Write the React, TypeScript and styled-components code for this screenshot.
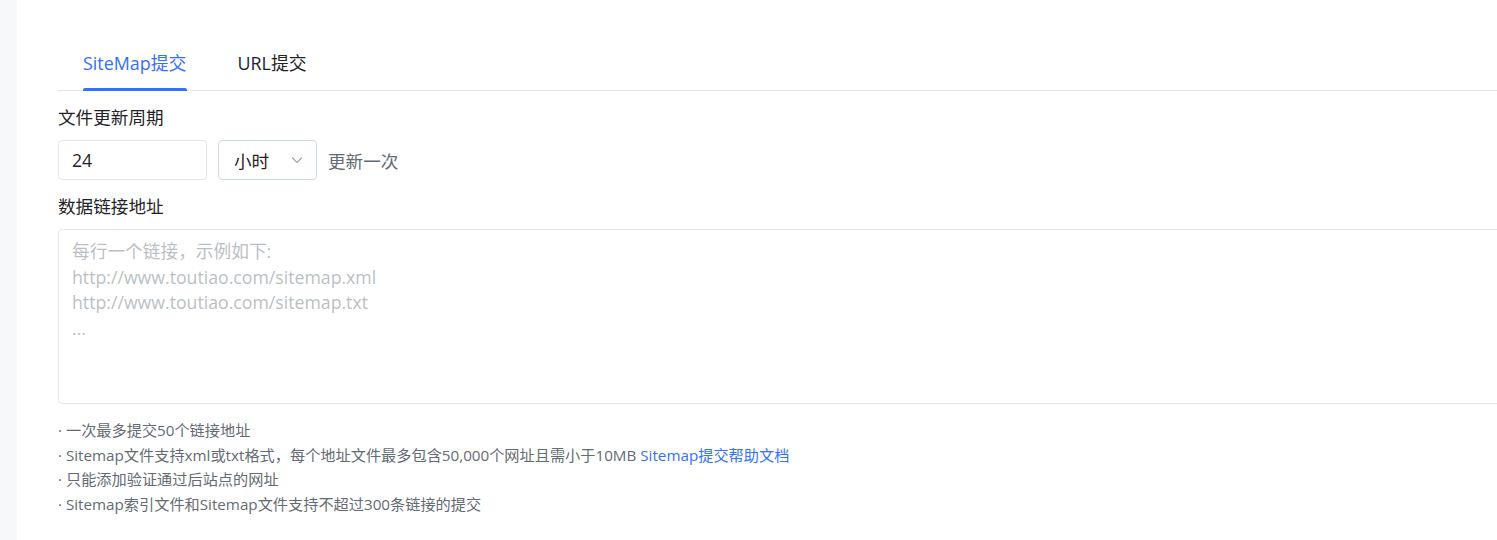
import React from "react";
import styled, { createGlobalStyle } from "styled-components";

const GlobalStyle = createGlobalStyle`
  html, body {
    margin: 0;
    padding: 0;
    background: #ffffff;
    overflow: hidden;
  }
  body {
    font-family: "Open Sans", "Noto Sans CJK SC", sans-serif;
    color: #1f2329;
  }
`;

const TextColor = "#1f2329";
const GreyTextColor = "#646a73";
const PlaceholderColor = "#bbbfc4";
const BorderColor = "#e5e6eb";
const PrimaryColor = "#3370ff";

const Page = styled.div`
  display: flex;
  height: 540px;
  width: 1497px;
  overflow: hidden;
`;

const SideStrip = styled.div`
  width: 17px;
  flex-shrink: 0;
  background: #f7f8fa;
`;

const Main = styled.main`
  flex: 1;
  padding: 40px 0 0 41px;
  min-width: 0;
`;

const Form = styled.div`
  width: 1460px;
`;

const TabBar = styled.div`
  display: flex;
  gap: 51px;
  padding-left: 25px;
  border-bottom: 1px solid ${BorderColor};
  height: 50px;
`;

const Tab = styled.div<{ $active?: boolean }>`
  position: relative;
  font-size: 17.9px;
  line-height: 47px;
  color: ${(p) => (p.$active ? PrimaryColor : TextColor)};
  cursor: pointer;
  &::after {
    content: "";
    display: ${(p) => (p.$active ? "block" : "none")};
    position: absolute;
    left: 0;
    right: 0;
    bottom: -1px;
    height: 3px;
    border-radius: 2px 2px 0 0;
    background: ${PrimaryColor};
  }
`;

const FieldLabel = styled.div`
  font-size: 17.6px;
  line-height: 26px;
  color: ${TextColor};
  margin-top: 13px;
  margin-bottom: 10px;
`;

const Row = styled.div`
  display: flex;
  align-items: center;
  gap: 11px;
`;

const TextInput = styled.div`
  box-sizing: border-box;
  width: 149px;
  height: 40px;
  padding: 0 13px;
  display: flex;
  align-items: center;
  border: 1px solid ${BorderColor};
  border-radius: 4px;
  font-size: 17.6px;
  color: ${TextColor};
`;

const Select = styled.div`
  box-sizing: border-box;
  width: 99px;
  height: 40px;
  padding: 0 13px 0 15px;
  display: flex;
  align-items: center;
  justify-content: space-between;
  border: 1px solid #cfd8ea;
  border-radius: 4px;
  font-size: 17.6px;
  color: ${TextColor};
`;

const Suffix = styled.span`
  font-size: 17.6px;
  color: ${GreyTextColor};
`;

const TextArea = styled.div`
  box-sizing: border-box;
  height: 175px;
  padding: 9px 13px;
  border: 1px solid ${BorderColor};
  border-radius: 4px;
  font-size: 17.7px;
  line-height: 25.5px;
  color: ${PlaceholderColor};
  white-space: pre-line;
`;

const HelpList = styled.ul`
  list-style: none;
  margin: 14px 0 0;
  padding: 0;
  font-size: 15.2px;
  line-height: 24.7px;
  color: ${GreyTextColor};
`;

const HelpItem = styled.li`
  &::before {
    content: "· ";
  }
`;

const HelpLink = styled.a`
  color: ${PrimaryColor};
  text-decoration: none;
`;

function Chevron() {
  return (
    <svg width="12" height="8" viewBox="0 0 12 8" fill="none">
      <path d="M1 1.5 L6 6.5 L11 1.5" stroke="#a2a7b0" strokeWidth="1.2" />
    </svg>
  );
}

const placeholder = [
  "每行一个链接，示例如下:",
  "http://www.toutiao.com/sitemap.xml",
  "http://www.toutiao.com/sitemap.txt",
  "...",
].join("\n");

export default function App() {
  return (
    <>
      <GlobalStyle />
      <Page>
        <SideStrip />
        <Main>
          <Form>
            <TabBar>
              <Tab $active>SiteMap提交</Tab>
              <Tab>URL提交</Tab>
            </TabBar>

            <FieldLabel>文件更新周期</FieldLabel>
            <Row>
              <TextInput>24</TextInput>
              <Select>
                <span>小时</span>
                <Chevron />
              </Select>
              <Suffix>更新一次</Suffix>
            </Row>

            <FieldLabel>数据链接地址</FieldLabel>
            <TextArea>{placeholder}</TextArea>

            <HelpList>
              <HelpItem>一次最多提交50个链接地址</HelpItem>
              <HelpItem>
                Sitemap文件支持xml或txt格式，每个地址文件最多包含50,000个网址且需小于10MB{" "}
                <HelpLink href="#">Sitemap提交帮助文档</HelpLink>
              </HelpItem>
              <HelpItem>只能添加验证通过后站点的网址</HelpItem>
              <HelpItem>Sitemap索引文件和Sitemap文件支持不超过300条链接的提交</HelpItem>
            </HelpList>
          </Form>
        </Main>
      </Page>
    </>
  );
}
